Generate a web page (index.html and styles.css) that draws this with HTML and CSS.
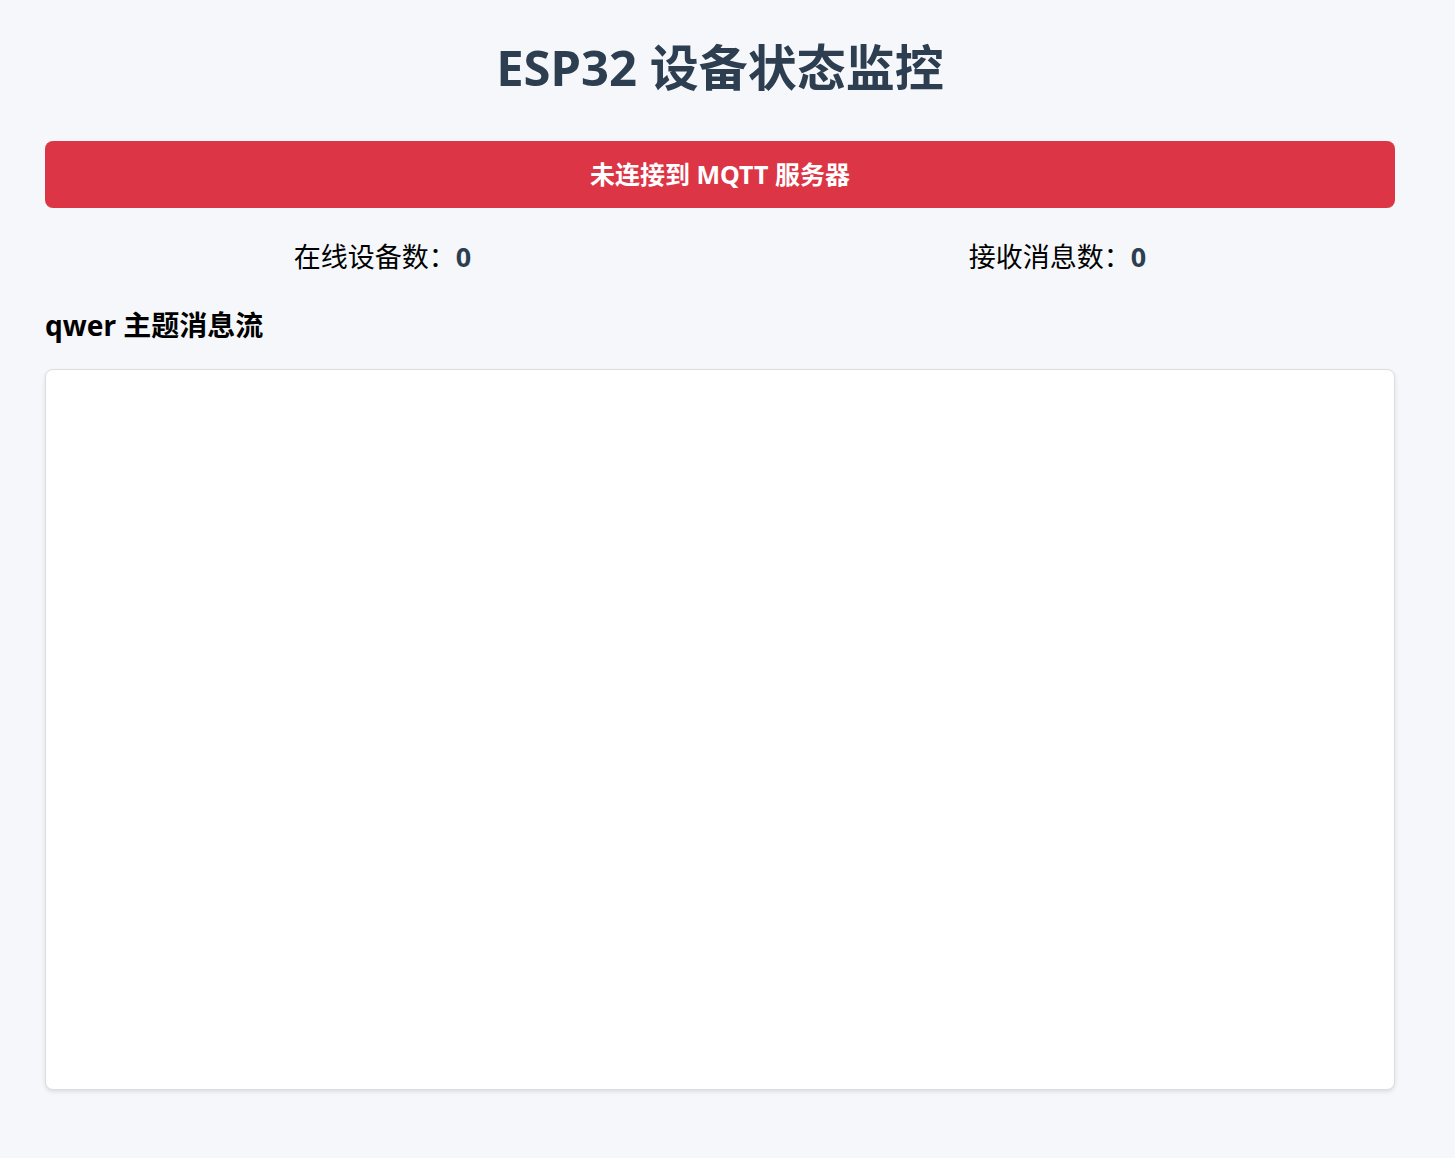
FILE: index.html
```html
<!DOCTYPE html>
<html lang="zh-CN">
<head>
<meta charset="utf-8">
<title>ESP32 设备状态监控</title>
<link rel="stylesheet" href="styles.css">
</head>
<body>
<div class="container">
  <h1 class="title">ESP32 设备状态监控</h1>
  <div class="status status-off">未连接到 MQTT 服务器</div>
  <div class="stats">
    <div class="stat">在线设备数：<span class="stat-value">0</span></div>
    <div class="stat">接收消息数：<span class="stat-value">0</span></div>
  </div>
  <h3 class="section-title">qwer 主题消息流</h3>
  <div class="messages"></div>
</div>
</body>
</html>
```
FILE: styles.css
```css
html, body {
  margin: 0;
  padding: 0;
}
body {
  background: #f5f7fa;
  font-family: "Noto Sans", "Noto Sans CJK SC", sans-serif;
  color: #000;
}
.container {
  width: 1350px;
  margin-left: 45px;
  padding-top: 38px;
  padding-bottom: 68px;
}
.title {
  margin: 0;
  font-size: 49px;
  line-height: 58px;
  font-weight: 700;
  text-align: center;
  color: #2c3e50;
}
.status {
  margin-top: 45px;
  padding: 15px;
  line-height: 37px;
  border-radius: 8px;
  font-size: 25px;
  font-weight: 700;
  text-align: center;
  color: #fff;
}
.status-off {
  background: #dc3545;
}
.stats {
  margin-top: 31px;
  display: grid;
  grid-template-columns: 1fr 1fr;
}
.stat {
  text-align: center;
  font-size: 27px;
  line-height: 36px;
}
.stat-value {
  font-weight: 700;
  color: #2c3e50;
}
.section-title {
  margin: 32px 0 0;
  font-size: 28px;
  line-height: 36px;
  font-weight: 700;
}
.messages {
  margin-top: 26px;
  height: 721px;
  box-sizing: border-box;
  background: #fff;
  border: 1px solid #dddddd;
  border-radius: 8px;
  box-shadow: 0 2px 4px rgba(0, 0, 0, 0.1);
}
```
